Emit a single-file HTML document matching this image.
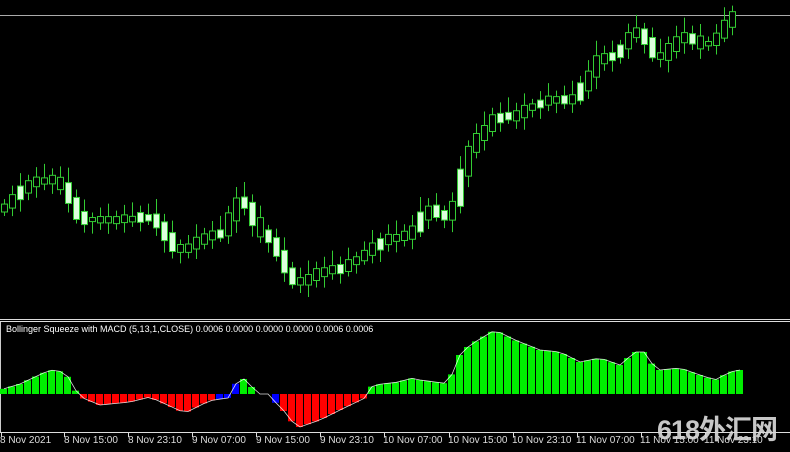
<!DOCTYPE html>
<html><head><meta charset="utf-8"><style>
html,body{margin:0;padding:0;background:#000;width:790px;height:452px;overflow:hidden}
svg{position:absolute;left:0;top:0}
.lbl{position:absolute;left:6px;top:324px;color:#fff;font:9px "Liberation Sans",sans-serif;white-space:nowrap}
.ax{position:absolute;top:435px;color:#ddd;font:10px "Liberation Sans",sans-serif;white-space:nowrap}
.wm{position:absolute;left:657px;top:408px;color:#d8d8d8;font:bold 27px "Liberation Sans","Noto Sans CJK SC",sans-serif;white-space:nowrap;letter-spacing:-1px;opacity:.92}
</style></head><body>
<svg id="s" width="790" height="452" xmlns="http://www.w3.org/2000/svg">
<line x1="0" y1="15.5" x2="790" y2="15.5" stroke="#aaa" stroke-width="1"/>
<line x1="0" y1="319.5" x2="790" y2="319.5" stroke="#ddd"/>
<line x1="0" y1="321.5" x2="790" y2="321.5" stroke="#ddd"/>
<line x1="0.5" y1="322" x2="0.5" y2="433" stroke="#ccc"/>
<line x1="0" y1="432.5" x2="790" y2="432.5" stroke="#ddd"/>
<g id="c"></g><g id="h"></g>
</svg>
<div class="lbl">Bollinger Squeeze with MACD (5,13,1,CLOSE) 0.0006 0.0000 0.0000 0.0000 0.0006 0.0006</div>
<div class="ax" style="left:0px">8 Nov 2021</div>
<div class="ax" style="left:64px">8 Nov 15:00</div>
<div class="ax" style="left:128px">8 Nov 23:10</div>
<div class="ax" style="left:192px">9 Nov 07:00</div>
<div class="ax" style="left:256px">9 Nov 15:00</div>
<div class="ax" style="left:320px">9 Nov 23:10</div>
<div class="ax" style="left:383px">10 Nov 07:00</div>
<div class="ax" style="left:448px">10 Nov 15:00</div>
<div class="ax" style="left:512px">10 Nov 23:10</div>
<div class="ax" style="left:576px">11 Nov 07:00</div>
<div class="ax" style="left:640px">11 Nov 15:00</div>
<div class="ax" style="left:704px">11 Nov 23:10</div>
<div class="wm">618外汇网</div>
<script>
(function(){
var NS="http://www.w3.org/2000/svg";
function el(t,a,p){var e=document.createElementNS(NS,t);for(var k in a)e.setAttribute(k,a[k]);p.appendChild(e);return e;}
var s=document.getElementById('s');
[1,64,128,192,256,320,384,449,513,577,641,705].forEach(function(x){el('line',{x1:x+.5,y1:432,x2:x+.5,y2:437,stroke:'#ddd'},s);});
var pts=[[5,210],[10,205],[17,195],[25,190],[35,180],[42,183],[50,178],[57,178],[65,185],[73,200],[81,222],[90,218],[98,220],[105,222],[113,220],[120,220],[130,218],[137,220],[145,215],[152,215],[162,225],[170,240],[178,250],[186,252],[194,245],[202,240],[210,235],[218,235],[226,235],[234,210],[242,190],[250,210],[258,225],[266,235],[274,240],[282,260],[290,275],[298,287],[306,280],[314,275],[322,272],[330,268],[338,270],[346,265],[354,262],[362,258],[370,252],[378,245],[386,240],[394,238],[402,235],[410,238],[418,225],[426,210],[434,205],[442,215],[450,225],[458,200],[466,160],[474,145],[482,135],[490,125],[498,115],[506,115],[514,118],[522,110],[530,108],[538,105],[546,103],[554,98],[562,100],[570,103],[578,95],[586,85],[594,70],[602,50],[610,60],[618,55],[626,45],[634,30],[642,30],[650,45],[658,62],[666,55],[674,45],[682,35],[690,35],[698,40],[706,47],[714,43],[722,35],[730,20],[736,12]];
var g=document.getElementById('c');
function interp(arr,x){if(x<=arr[0][0])return arr[0][1];for(var i=0;i<arr.length-1;i++){if(x<=arr[i+1][0]){var a=arr[i],b=arr[i+1];return a[1]+(b[1]-a[1])*(x-a[0])/(b[0]-a[0]);}}return arr[arr.length-1][1];}
for(var i=0;i<92;i++){var x=4+i*8;var y=interp(pts,x);var yn=interp(pts,x+8);var yp=interp(pts,x-8);
 var o=(y+yp)/2, c=(y+yn)/2; var r=((i*37)%11);
 var bt=Math.min(o,c)-2-(r%3),bb=Math.max(o,c)+2+(r%4);
 if(bb-bt<4){bb=bt+4;}
 var bull=c<o; if(i%5==2)bull=!bull;
 el('line',{x1:x+.5,y1:bt-5-r,x2:x+.5,y2:bb+4+((i*13)%9),stroke:'#3c3','stroke-width':1},g);
 el('rect',{x:x-2.5,y:bt,width:6,height:bb-bt,fill:bull?'#000':'#dfd',stroke:'#3c3','stroke-width':1},g);
}
var hp=[[0,390],[20,384],[50,370],[65,372],[75,388],[78,396],[100,405],[130,402],[150,397],[185,413],[205,403],[213,400],[228,398],[237,382],[240,375],[253,388],[258,394],[268,394],[278,405],[285,412],[297,428],[320,420],[340,410],[365,398],[373,385],[400,382],[410,378],[420,380],[450,384],[455,360],[470,345],[495,330],[515,340],[540,350],[560,352],[580,362],[600,358],[620,365],[635,352],[645,352],[650,362],[660,370],[680,368],[700,375],[715,380],[730,372],[740,370]];
var h=document.getElementById('h');var Z=394;var line=[];
for(var i=0;i<93;i++){var x=i*8;var v=interp(hp,x+4);if(x>=740)break;
 var col=v<Z?'#0e0':'#f00'; if((x>=213&&x<237)||(x>=266&&x<278))col='#00f';
 if(x>=253&&x<266)v=Z;
 var t=Math.min(v,Z),b=Math.max(v,Z); if(b-t>0.5)el('rect',{x:x,y:t,width:7,height:b-t,fill:col},h);
 line.push((x+4)+','+v);}
el('polyline',{points:line.join(' '),fill:'none',stroke:'#fff','stroke-width':0.8,opacity:.85},h);
})();
</script>
</body></html>
